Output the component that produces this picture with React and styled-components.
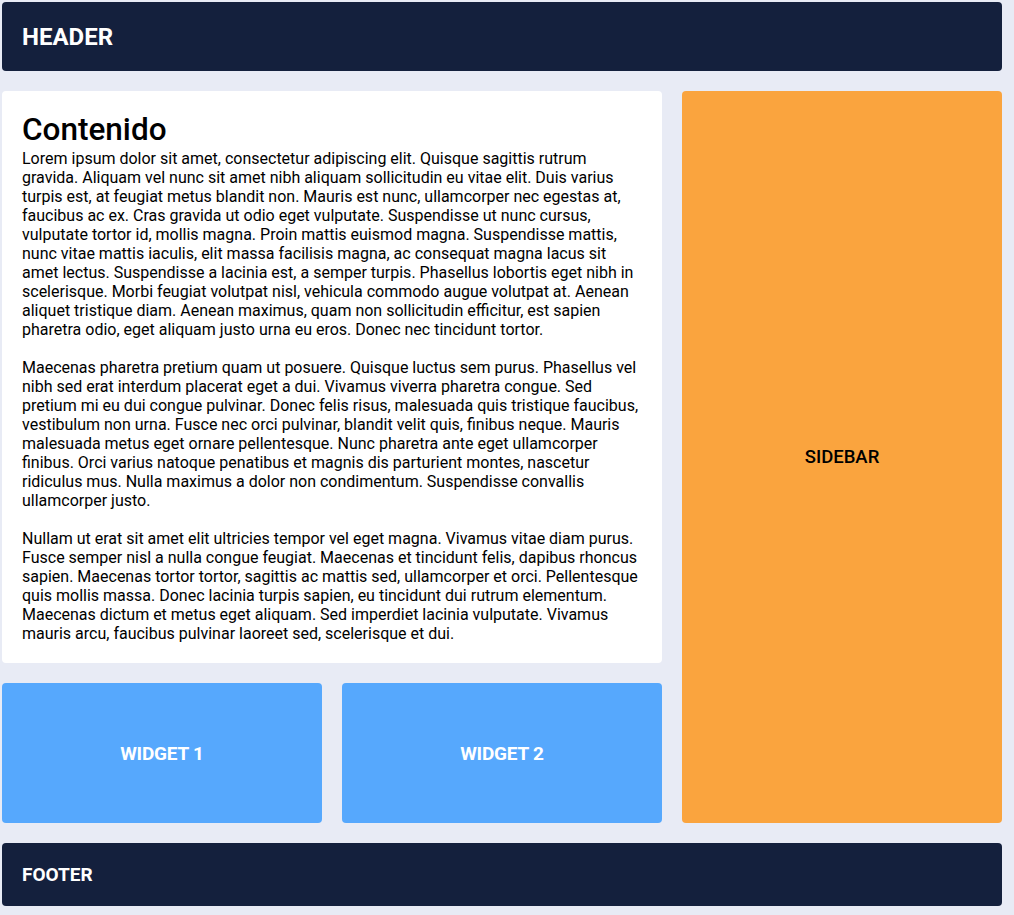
import React from "react";
import styled, { createGlobalStyle } from "styled-components";

const Global = createGlobalStyle`
  html, body { margin: 0; padding: 0; background: #e8ebf5; }
  body { font-family: Roboto, "Liberation Sans", sans-serif; color: #000; }
`;

const Layout = styled.div`
  width: 1000px;
  padding: 2px;
  display: grid;
  grid-template-columns: 320px 320px 320px;
  grid-template-rows: 69px 572px 140px 63px;
  gap: 20px;
`;

const Bar = styled.header`
  grid-column: 1 / 4;
  background: #14203d;
  color: #fff;
  border-radius: 4px;
  padding: 0 20px;
  display: flex;
  align-items: center;
  font-weight: 700;
  font-size: ${(p) => p.$size}px;
`;

const Content = styled.main`
  grid-column: 1 / 3;
  background: #fff;
  border-radius: 4px;
  padding: 20px;
  font-size: 16px;
  line-height: 19px;
`;

const Title = styled.h1`
  margin: 0;
  font-size: 31.5px;
  line-height: 38px;
  font-weight: 500;
`;

const Para = styled.p`
  margin: 0 0 19px;
  &:last-child { margin-bottom: 0; }
`;

const Sidebar = styled.aside`
  grid-column: 3;
  grid-row: 2 / 4;
  background: #faa43e;
  border-radius: 4px;
  display: flex;
  align-items: center;
  justify-content: center;
  font-size: 18.5px;
  font-weight: 500;
`;

const Widget = styled.div`
  background: #56a8fd;
  border-radius: 4px;
  color: #fff;
  display: flex;
  align-items: center;
  justify-content: center;
  font-size: 19px;
  font-weight: 700;
  letter-spacing: -0.2px;
`;

export default function App() {
  return (
    <>
      <Global />
      <Layout>
        <Bar $size={24}>HEADER</Bar>
        <Content>
          <Title>Contenido</Title>
          <Para>
            Lorem ipsum dolor sit amet, consectetur adipiscing elit. Quisque sagittis rutrum gravida. Aliquam vel nunc sit amet nibh aliquam sollicitudin eu vitae elit. Duis varius turpis est, at feugiat metus blandit non. Mauris est nunc, ullamcorper nec egestas at, faucibus ac ex. Cras gravida ut odio eget vulputate. Suspendisse ut nunc cursus, vulputate tortor id, mollis magna. Proin mattis euismod magna. Suspendisse mattis, nunc vitae mattis iaculis, elit massa facilisis magna, ac consequat magna lacus sit amet lectus. Suspendisse a lacinia est, a semper turpis. Phasellus lobortis eget nibh in scelerisque. Morbi feugiat volutpat nisl, vehicula commodo augue volutpat at. Aenean aliquet tristique diam. Aenean maximus, quam non sollicitudin efficitur, est sapien pharetra odio, eget aliquam justo urna eu eros. Donec nec tincidunt tortor.
          </Para>
          <Para>
            Maecenas pharetra pretium quam ut posuere. Quisque luctus sem purus. Phasellus vel nibh sed erat interdum placerat eget a dui. Vivamus viverra pharetra congue. Sed pretium mi eu dui congue pulvinar. Donec felis risus, malesuada quis tristique faucibus, vestibulum non urna. Fusce nec orci pulvinar, blandit velit quis, finibus neque. Mauris malesuada metus eget ornare pellentesque. Nunc pharetra ante eget ullamcorper finibus. Orci varius natoque penatibus et magnis dis parturient montes, nascetur ridiculus mus. Nulla maximus a dolor non condimentum. Suspendisse convallis ullamcorper justo.
          </Para>
          <Para>
            Nullam ut erat sit amet elit ultricies tempor vel eget magna. Vivamus vitae diam purus. Fusce semper nisl a nulla congue feugiat. Maecenas et tincidunt felis, dapibus rhoncus sapien. Maecenas tortor tortor, sagittis ac mattis sed, ullamcorper et orci. Pellentesque quis mollis massa. Donec lacinia turpis sapien, eu tincidunt dui rutrum elementum. Maecenas dictum et metus eget aliquam. Sed imperdiet lacinia vulputate. Vivamus mauris arcu, faucibus pulvinar laoreet sed, scelerisque et dui.
          </Para>
        </Content>
        <Sidebar>SIDEBAR</Sidebar>
        <Widget>WIDGET 1</Widget>
        <Widget>WIDGET 2</Widget>
        <Bar as="footer" $size={19}>FOOTER</Bar>
      </Layout>
    </>
  );
}
